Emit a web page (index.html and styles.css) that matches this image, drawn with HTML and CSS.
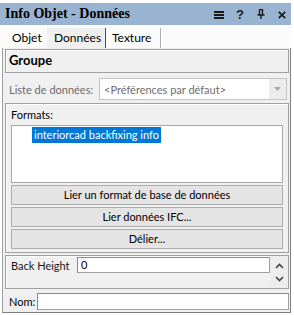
FILE: index.html
```html
<!DOCTYPE html>
<html>
<head>
<meta charset="utf-8">
<link rel="stylesheet" href="styles.css">
</head>
<body>
<div class="win">
  <div class="title">
    <span class="ttl">Info Objet - Données</span>
    <div class="ticons">
      <svg class="ic ham" width="10" height="8" viewBox="0 0 10 8"><rect x="0" y="0" width="10" height="2" fill="#1a1a1a"/><rect x="0" y="3" width="10" height="2" fill="#1a1a1a"/><rect x="0" y="6" width="10" height="2" fill="#1a1a1a"/></svg>
      <span class="ic q">?</span>
      <svg class="ic pin" width="8" height="10" viewBox="0 0 8 10"><path d="M2 0.5h4M2.5 0.5v5M5.5 0.5v5M0.5 6h7M4 6v4" stroke="#1a1a1a" stroke-width="1.4" fill="none"/></svg>
      <svg class="ic cls" width="8" height="8" viewBox="0 0 8 8"><path d="M0.8 0.8L7.2 7.2M7.2 0.8L0.8 7.2" stroke="#1a1a1a" stroke-width="1.7"/></svg>
    </div>
  </div>
  <div class="tabs">
    <div class="tab t1">Objet</div>
    <div class="tab t2">Données</div>
    <div class="tab t3">Texture</div>
  </div>
  <div class="panel">
    <div class="box groupe">Groupe</div>
    <div class="row liste">
      <span class="lbl dis">Liste de données:</span>
      <div class="select">
        <span class="seltxt">&lt;Préférences par défaut&gt;</span>
        <span class="arrow"><svg width="7" height="4" viewBox="0 0 7 4"><path d="M0 0h7L3.5 4z" fill="#a8a8a8"/></svg></span>
      </div>
    </div>
    <div class="box formats">
      <div class="flabel">Formats:</div>
      <div class="list"><div class="item">interiorcad backfixing info</div></div>
      <div class="btn">Lier un format de base de données</div>
      <div class="btn">Lier données IFC...</div>
      <div class="btn">Délier...</div>
    </div>
    <div class="box back">
      <span class="bhlabel">Back Height</span>
      <div class="input bhinput">0</div>
      <div class="spin">
        <svg width="9" height="6" viewBox="0 0 9 6"><path d="M1 5L4.5 1.5L8 5" stroke="#444" stroke-width="1.6" fill="none"/></svg>
        <svg width="9" height="6" viewBox="0 0 9 6"><path d="M1 1L4.5 4.5L8 1" stroke="#444" stroke-width="1.6" fill="none"/></svg>
      </div>
    </div>
    <div class="row nom">
      <span class="lbl nomlbl">Nom:</span>
      <div class="input nominput"></div>
    </div>
  </div>
</div>
</body>
</html>
```
FILE: styles.css
```css
html, body {
  margin: 0;
  padding: 0;
  background: #ffffff;
}
body {
  font-family: Lato, "Liberation Sans", Arial, sans-serif;
  font-size: 11px;
  color: #000;
}
.win {
  width: 292px;
  height: 315px;
  box-sizing: border-box;
  padding-top: 3px;
  background: #ffffff;
}
.title {
  height: 22px;
  background: #99b4d1;
  display: flex;
  align-items: center;
  justify-content: space-between;
  padding-left: 5px;
  padding-right: 5px;
  margin-right: 1px;
}
.ttl {
  font-family: "Liberation Serif", "Times New Roman", serif;
  font-weight: bold;
  font-size: 14px;
  color: #000;
  line-height: 22px;
}
.ticons {
  display: flex;
  align-items: center;
  height: 22px;
}
.ic { display: block; }
.ham { margin-right: 12px; margin-top: 1px; }
.q {
  font-family: "Liberation Sans", Arial, sans-serif;
  font-weight: bold;
  font-size: 13px;
  color: #1a1a1a;
  margin-right: 13px;
  line-height: 13px;
}
.pin { margin-right: 13px; }
.cls { margin-top: 1px; }

.tabs {
  height: 23px;
  display: flex;
  background: #fbfbfb;
}
.tab {
  height: 20px;
  margin-top: 3px;
  line-height: 19px;
  font-size: 12px;
  color: #000;
  box-sizing: border-box;
}
.t1 { width: 47px; padding-left: 12px; }
.t2 {
  width: 59px;
  padding-left: 7px;
  background: #f0f0f0;
  border-right: 1px solid #4a4a4a;
}
.t3 {
  width: 55px;
  padding-left: 6px;
  border-right: 1px solid #b0b0b0;
}

.panel {
  margin-left: 2px;
  width: 289px;
  height: 265px;
  box-sizing: border-box;
  background: #f0f0f0;
  border-left: 1px solid #a0a0a0;
  border-right: 1px solid #7f7f7f;
  border-bottom: 1px solid #7f7f7f;
  padding: 1px 1px 0 2px;
  display: flex;
  flex-direction: column;
}
.box {
  border: 1px solid #a0a0a0;
  box-shadow: inset 1px 1px 0 #ffffff;
  box-sizing: border-box;
}
.groupe {
  height: 24px;
  font-weight: bold;
  font-size: 13px;
  line-height: 21px;
  padding-left: 3px;
}
.row {
  display: flex;
  align-items: center;
}
.liste {
  margin-top: 5px;
  height: 22px;
}
.lbl {
  padding-left: 4px;
  white-space: nowrap;
}
.dis { color: #6d6d6d; width: 94px; flex: none; box-sizing: border-box; }
.select {
  width: 188px;
  height: 22px;
  box-sizing: border-box;
  background: #fff;
  border: 1px solid #c4c4c4;
  display: flex;
  align-items: center;
  justify-content: space-between;
  padding-left: 4px;
}
.seltxt { color: #6d6d6d; }
.arrow {
  width: 17px;
  height: 20px;
  background: #ececec;
  display: flex;
  align-items: center;
  justify-content: center;
}

.formats {
  margin-top: 3px;
  height: 150px;
  padding: 0 5px;
  display: flex;
  flex-direction: column;
}
.flabel {
  height: 21px;
  line-height: 22px;
  flex: none;
}
.list {
  height: 58px;
  flex: none;
  background: #fff;
  border: 1px solid #a8a8a8;
  box-sizing: border-box;
  padding-top: 1px;
  padding-left: 20px;
}
.item {
  display: inline-block;
  background: #0078d7;
  color: #fff;
  height: 16px;
  line-height: 16px;
  padding: 0 2px 0 2px;
}
.btn {
  height: 20px;
  flex: none;
  margin-top: 2px;
  box-sizing: border-box;
  background: #e4e4e4;
  border: 1px solid #adadad;
  text-align: center;
  line-height: 18px;
}

.back {
  margin-top: 2px;
  height: 34px;
  display: grid;
  grid-template-columns: 71px 193px 1fr;
  align-items: start;
}
.bhlabel {
  padding-left: 5px;
  line-height: 18px;
  padding-top: 1px;
  color: #1a1a1a;
  white-space: nowrap;
}
.input {
  background: #fff;
  border: 1px solid #a0a0a0;
  border-top-color: #8a8a8a;
  border-left-color: #8a8a8a;
  box-sizing: border-box;
}
.bhinput {
  margin-top: 1px;
  height: 16px;
  line-height: 14px;
  padding-left: 3px;
}
.spin {
  height: 32px;
  background: #ededed;
  display: flex;
  flex-direction: column;
  align-items: center;
  justify-content: space-around;
  padding: 3px 0;
  box-sizing: border-box;
}
.nom {
  margin-top: 4px;
  height: 17px;
}
.nomlbl { width: 32px; flex: none; box-sizing: border-box; }
.nominput {
  width: 252px;
  height: 17px;
}
```
